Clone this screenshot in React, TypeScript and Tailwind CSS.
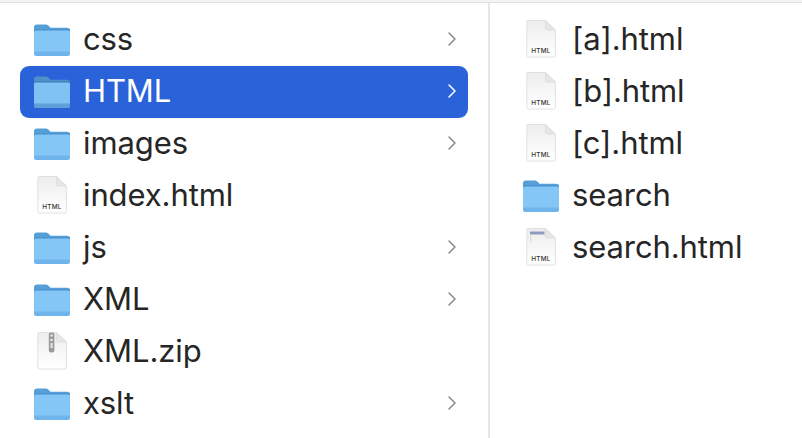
import React from 'react';
import { ChevronRight } from 'lucide-react';

const FolderIcon = ({ selected = false }: { selected?: boolean }) => (
  <svg width="38" height="34" viewBox="0 0 38 34" className="shrink-0">
    <path d="M1 4.5C1 2.5 2 1.5 4 1.5H12.5C14 1.5 14.8 2 15.8 3L17.5 4.8H34C36 4.8 37 5.8 37 7.5V14H1Z" fill={selected ? '#4f90c9' : '#569fd8'} />
    <rect x="1" y="7.2" width="36" height="25.8" rx="2.4" fill={selected ? '#7fc2f3' : '#84c7f7'} />
    <path d="M1 28.5H37V30.6C37 32.2 36 33 34.6 33H3.4C2 33 1 32.2 1 30.6Z" fill={selected ? '#5f9fd8' : '#6fb5ec'} />
    <rect x="1" y="6.2" width="36" height="1.2" fill={selected ? '#3f7fb8' : '#4b93cf'} />
  </svg>
);

const Sheet = ({ children }: { children?: React.ReactNode }) => (
  <svg width="30" height="39" viewBox="0 0 30 39" className="shrink-0 mb-[3px]">
    <defs>
      <linearGradient id="sheet" x1="0" y1="0" x2="0" y2="1">
        <stop offset="0" stopColor="#ececec" />
        <stop offset="0.55" stopColor="#f8f8f8" />
        <stop offset="1" stopColor="#ffffff" />
      </linearGradient>
    </defs>
    <path d="M2 1.5C1 1.5 .8 2 .8 3V36.5C.8 37.5 1.2 38 2 38H28C29 38 29.4 37.5 29.4 36.5V11L19.5 1.5Z" fill="url(#sheet)" stroke="#dadada" strokeWidth="0.8" />
    <path d="M19.5 1.5V9C19.5 10.4 20.2 11 21.5 11H29.4Z" fill="#e6e6e6" stroke="#d6d6d6" strokeWidth="0.6" />
    {children}
  </svg>
);

const HtmlLabel = () => (
  <text x="15" y="33.5" textAnchor="middle" fontSize="6.4" fontWeight="500" fill="#333333" fontFamily="'Inter', sans-serif" letterSpacing="0.3">HTML</text>
);

const HtmlIcon = () => <Sheet><HtmlLabel /></Sheet>;

const SearchHtmlIcon = () => (
  <Sheet>
    <rect x="4" y="4.5" width="14.5" height="3" fill="#8c9cbd" />
    <rect x="4" y="7.5" width="1.2" height="8" fill="#dddddd" />
    <HtmlLabel />
  </Sheet>
);

const ZipIcon = () => (
  <Sheet>
    <rect x="11.8" y="1.5" width="5.6" height="20" rx="2" fill="#9a9a9a" />
    <rect x="13.4" y="3.5" width="2.4" height="2" fill="#ececec" />
    <rect x="13.4" y="8" width="2.4" height="2" fill="#ececec" />
    <rect x="13.4" y="12" width="2.4" height="5" fill="#dedede" />
  </Sheet>
);

type Item = { name: string; icon: 'folder' | 'html' | 'zip' | 'searchHtml'; more?: boolean; selected?: boolean };

const leftItems: Item[] = [
  { name: 'css', icon: 'folder', more: true },
  { name: 'HTML', icon: 'folder', more: true, selected: true },
  { name: 'images', icon: 'folder', more: true },
  { name: 'index.html', icon: 'html' },
  { name: 'js', icon: 'folder', more: true },
  { name: 'XML', icon: 'folder', more: true },
  { name: 'XML.zip', icon: 'zip' },
  { name: 'xslt', icon: 'folder', more: true },
];

const rightItems: Item[] = [
  { name: '[a].html', icon: 'html' },
  { name: '[b].html', icon: 'html' },
  { name: '[c].html', icon: 'html' },
  { name: 'search', icon: 'folder' },
  { name: 'search.html', icon: 'searchHtml' },
];

const ItemIcon = ({ item }: { item: Item }) => {
  let icon = <HtmlIcon />;
  if (item.icon === 'folder') icon = <FolderIcon selected={item.selected} />;
  if (item.icon === 'zip') icon = <ZipIcon />;
  if (item.icon === 'searchHtml') icon = <SearchHtmlIcon />;
  return <div className="w-[38px] flex justify-center shrink-0">{icon}</div>;
};

const Row = ({ item }: { item: Item }) => (
  <div className={`h-[52px] flex items-center pl-[13px] pr-[4px] rounded-[9px] ${item.selected ? 'bg-[#2a63d9] text-white' : 'text-[#262626]'}`}>
    <ItemIcon item={item} />
    <span className="ml-[12px] flex-1 text-[31px] leading-none pb-[4px] -tracking-[0.1px]">{item.name}</span>
    {item.more && (
      <ChevronRight size={24} strokeWidth={1.5} className={`mb-[2px] ${item.selected ? 'text-white' : 'text-[#8a8a8a]'}`} />
    )}
  </div>
);

export default function App() {
  return (
    <div className="w-[802px] h-[438px] overflow-hidden bg-white font-['Inter','Liberation_Sans',sans-serif]">
      <div className="h-[3px] bg-[#e0e0e0] border-t-2 border-[#f4f4f4]" />
      <div className="flex h-[435px]">
        <div className="w-[490px] shrink-0 px-[20px] pr-[20px] pt-[11px] border-r-2 border-[#e6e6e6]">
          {leftItems.map((item) => <Row key={item.name} item={item} />)}
        </div>
        <div className="flex-1 pl-[19px] pr-[12px] pt-[11px]">
          {rightItems.map((item) => <Row key={item.name} item={item} />)}
        </div>
      </div>
    </div>
  );
}
